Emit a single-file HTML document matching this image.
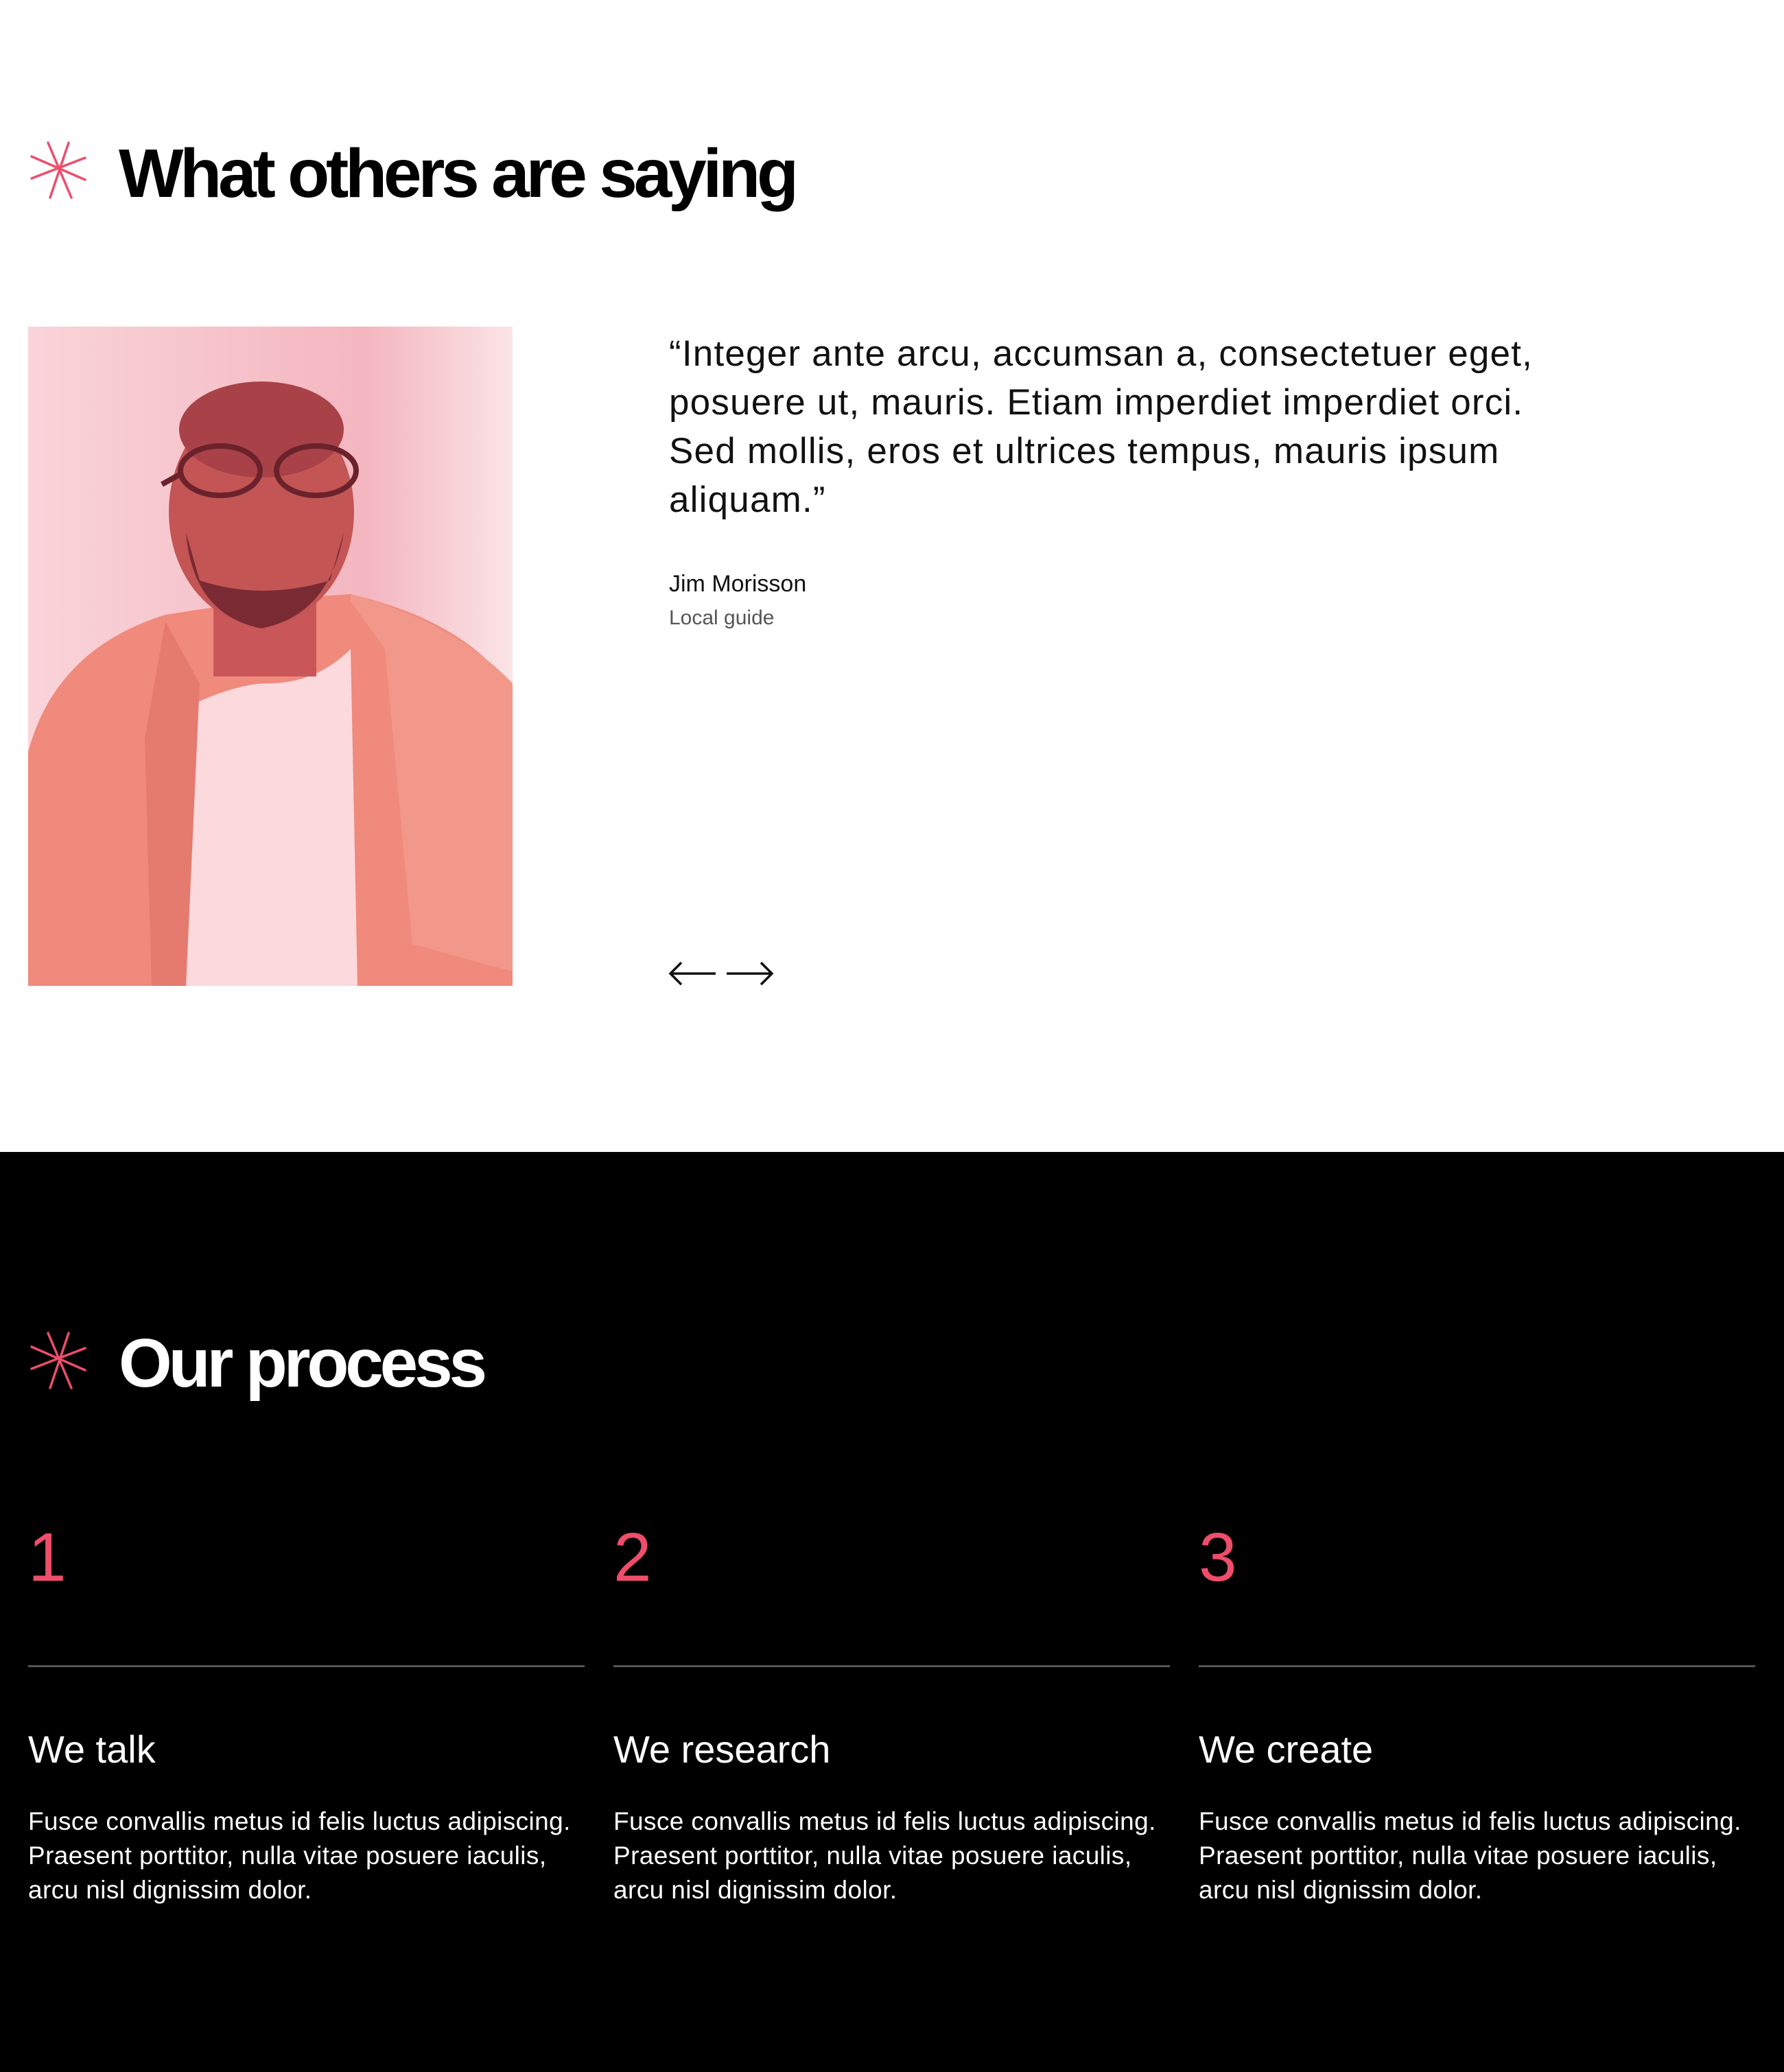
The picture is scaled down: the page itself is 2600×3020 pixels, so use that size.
<!DOCTYPE html>
<html><head><meta charset="utf-8"><style>
*{margin:0;padding:0;box-sizing:border-box}
html,body{width:2600px;height:3020px;overflow:hidden;background:#fff;font-family:"Liberation Sans",sans-serif}
.top{position:absolute;left:0;top:0;width:2600px;height:1679px;background:#fff}
.dark{position:absolute;left:0;top:1679px;width:2600px;height:1341px;background:#000}
.ast{position:absolute}
h2{position:absolute;font-weight:700;font-size:100px;letter-spacing:-5.2px;line-height:1;white-space:nowrap}
.quote{position:absolute;left:975px;top:480px;font-size:53px;line-height:71px;letter-spacing:1.2px;color:#111;white-space:nowrap}
.name{position:absolute;left:975px;top:832px;font-size:34px;color:#111;letter-spacing:0px}
.role{position:absolute;left:975px;top:884px;font-size:30px;color:#555;letter-spacing:0px}
.col{position:absolute;top:2180px;width:811px;color:#fff}
.num{font-size:100px;color:#ee4d6b;line-height:1;height:247px;padding-top:40px}
.line{height:3px;background:#555}
.ttl{font-size:56px;letter-spacing:0px;margin-top:92px;line-height:1}
.p{font-size:37px;line-height:50px;letter-spacing:0.4px;margin-top:52px;white-space:nowrap}
</style></head><body>
<div class="top">
<svg class="ast" style="left:40px;top:206px" width="90" height="90" viewBox="0 0 90 90"><g stroke="#ee4d6b" stroke-width="3.5" stroke-linecap="round"><line x1="30" y1="2" x2="64" y2="82"/><line x1="60" y1="2" x2="33" y2="82"/><line x1="6" y1="22" x2="84" y2="56"/><line x1="84" y1="24" x2="6" y2="54"/></g></svg>
<h2 style="left:173px;top:203px;color:#000">What others are saying</h2>
<svg style="position:absolute;left:41px;top:476px" width="706" height="961" viewBox="0 0 706 961">
<defs><linearGradient id="bg" x1="0" x2="1"><stop offset="0" stop-color="#f9d4da"/><stop offset=".7" stop-color="#f4b6c0"/><stop offset="1" stop-color="#fbe4e7"/></linearGradient></defs>
<rect width="706" height="961" fill="url(#bg)"/>
<path d="M0 961 L0 620 Q40 470 200 420 L330 400 L470 390 Q640 430 706 530 L706 961 Z" fill="#ef8a7c"/>
<path d="M225 961 L220 560 Q300 520 350 520 Q420 520 470 470 L480 961 Z" fill="#fbd9dc"/>
<path d="M470 400 L520 470 L560 900 L706 940 L706 520 Q620 430 470 390Z" fill="#f2988a"/>
<path d="M200 430 L250 520 L230 961 L180 961 L170 600Z" fill="#e57a6e"/>
<rect x="270" y="380" width="150" height="130" fill="#c9575a"/>
<ellipse cx="340" cy="270" rx="135" ry="165" fill="#c45555"/>
<ellipse cx="340" cy="150" rx="120" ry="70" fill="#a84248"/>
<path d="M230 300 Q240 420 340 440 Q440 420 460 300 L440 370 Q340 400 250 370Z" fill="#7a2a33"/>
<g fill="none" stroke="#6b222b" stroke-width="8"><ellipse cx="280" cy="210" rx="58" ry="36"/><ellipse cx="420" cy="210" rx="58" ry="36"/><line x1="222" y1="215" x2="195" y2="230"/></g>
</svg>
<div class="quote">“Integer ante arcu, accumsan a, consectetuer eget,<br>posuere ut, mauris. Etiam imperdiet imperdiet orci.<br>Sed mollis, eros et ultrices tempus, mauris ipsum<br>aliquam.”</div>
<div class="name">Jim Morisson</div>
<div class="role">Local guide</div>
<svg style="position:absolute;left:973px;top:1396px" width="156" height="46" viewBox="0 0 156 46"><g fill="none" stroke="#111" stroke-width="3.5"><path d="M70 23 H4 M20 7 L4 23 L20 39"/><path d="M86 23 H152 M136 7 L152 23 L136 39"/></g></svg>
</div>
<div class="dark">
<svg class="ast" style="left:40px;top:262px" width="90" height="90" viewBox="0 0 90 90"><g stroke="#ee4d6b" stroke-width="3.5" stroke-linecap="round"><line x1="30" y1="2" x2="64" y2="82"/><line x1="60" y1="2" x2="33" y2="82"/><line x1="6" y1="22" x2="84" y2="56"/><line x1="84" y1="24" x2="6" y2="54"/></g></svg>
<h2 style="left:173px;top:258px;color:#fff">Our process</h2>
</div>
<div class="col" style="left:41px"><div class="num">1</div><div class="line"></div><div class="ttl">We talk</div><div class="p">Fusce convallis metus id felis luctus adipiscing.<br>Praesent porttitor, nulla vitae posuere iaculis,<br>arcu nisl dignissim dolor.</div></div>
<div class="col" style="left:894px"><div class="num">2</div><div class="line"></div><div class="ttl">We research</div><div class="p">Fusce convallis metus id felis luctus adipiscing.<br>Praesent porttitor, nulla vitae posuere iaculis,<br>arcu nisl dignissim dolor.</div></div>
<div class="col" style="left:1747px"><div class="num">3</div><div class="line"></div><div class="ttl">We create</div><div class="p">Fusce convallis metus id felis luctus adipiscing.<br>Praesent porttitor, nulla vitae posuere iaculis,<br>arcu nisl dignissim dolor.</div></div>
</body></html>
